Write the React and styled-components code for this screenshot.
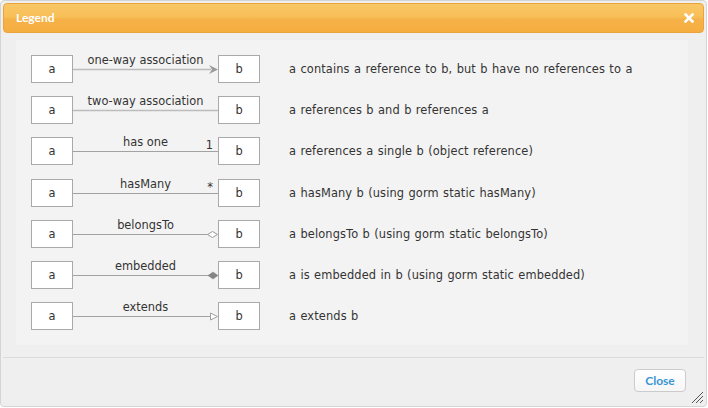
import React from "react";
import styled, { createGlobalStyle } from "styled-components";

const Global = createGlobalStyle`
  html, body { margin: 0; padding: 0; background: #ffffff; }
  body { width: 708px; height: 408px; overflow: hidden; }
`;

const Dialog = styled.div`
  position: relative;
  box-sizing: border-box;
  width: 707px;
  height: 407px;
  border: 1px solid #d4d4d4;
  border-radius: 4px;
  padding: 2px;
  background: #efefef;
  display: flex;
  flex-direction: column;
  font-family: "DejaVu Sans", Verdana, sans-serif;
`;

const Header = styled.div`
  box-sizing: border-box;
  height: 30px;
  border: 1px solid #eba43c;
  border-radius: 4px;
  background: linear-gradient(to bottom, #f9c767 0%, #f8bf58 45%, #f6b248 55%, #f5ad40 100%);
  display: flex;
  align-items: center;
  justify-content: space-between;
  padding: 0 9px 0 12px;
`;

const Title = styled.span`
  font-family: Lato, "Open Sans", sans-serif;
  font-weight: 700;
  font-size: 12px;
  color: #ffffff;
`;

const CloseX = styled.button`
  border: 0;
  background: none;
  padding: 0;
  width: 10px;
  height: 10px;
  display: flex;
  align-items: center;
  justify-content: center;
  cursor: pointer;
`;

const Body = styled.div`
  flex: 1;
  padding: 7px 16px 12px 13px;
`;

const Panel = styled.div`
  background: #f3f3f3;
  padding: 15px;
  display: flex;
  flex-direction: column;
  gap: 13.2px;
`;

const Row = styled.div`
  display: flex;
  align-items: center;
  height: 28px;
`;

const Box = styled.div`
  box-sizing: border-box;
  width: 42px;
  height: 28px;
  border: 1px solid #a9a9a9;
  background: #ffffff;
  display: flex;
  align-items: center;
  justify-content: center;
  font-size: 11.4px;
  color: #333;
`;

const Connector = styled.div`
  width: 145px;
  height: 28px;
  display: grid;
  & > * { grid-area: 1 / 1; }
`;

const Label = styled.span`
  justify-self: center;
  align-self: start;
  margin-top: -1px;
  font-size: 11.4px;
  line-height: 12px;
  color: #333;
  white-space: nowrap;
`;

const Mult = styled.span`
  justify-self: end;
  align-self: start;
  margin-top: 2px;
  margin-right: 5px;
  font-size: 11.4px;
  line-height: 12px;
  color: #333;
`;

const Line = styled.svg`
  width: 145px;
  height: 28px;
  display: block;
`;

const Desc = styled.span`
  margin-left: 29px;
  font-size: 11.4px;
  letter-spacing: 0.12px;
  word-spacing: 0.6px;
  color: #333;
  white-space: nowrap;
`;

const Footer = styled.div`
  border-top: 1px solid #dcdcdc;
  display: flex;
  justify-content: flex-end;
  padding: 11px 18px 0 0;
  height: 47px;
  box-sizing: border-box;
`;

const Button = styled.button`
  box-sizing: border-box;
  width: 52px;
  height: 23px;
  border: 1px solid #cbcbcb;
  border-radius: 4px;
  background: linear-gradient(to bottom, #ffffff, #f6f6f6);
  font-family: Lato, "Open Sans", sans-serif;
  font-weight: 700;
  font-size: 12px;
  color: #3a95d4;
  padding: 0;
  cursor: pointer;
`;

const Grip = styled.svg`
  position: absolute;
  right: 2px;
  bottom: 2px;
  width: 13px;
  height: 13px;
`;

const heads = {
  arrow: <polygon points="145,14.5 136,10 139,14.5 136,19" fill="#9a9a9a" />,
  none: null,
  hollowDiamond: (
    <polygon points="144.5,14.5 139.5,11.5 134.5,14.5 139.5,17.5" fill="#ffffff" stroke="#999" strokeWidth="1" />
  ),
  filledDiamond: (
    <polygon points="145,14.5 140,11 135,14.5 140,18" fill="#858585" stroke="#858585" strokeWidth="0.5" />
  ),
  triangle: <polygon points="144.5,14.5 137.5,11 137.5,18" fill="#ffffff" stroke="#a0a0a0" strokeWidth="1" />,
};

const rows = [
  { label: "one-way association", head: "arrow", light: true, desc: "a contains a reference to b, but b have no references to a" },
  { label: "two-way association", head: "none", light: true, desc: "a references b and b references a" },
  { label: "has one", head: "none", mult: "1", desc: "a references a single b (object reference)" },
  { label: "hasMany", head: "none", mult: "*", desc: "a hasMany b (using gorm static hasMany)" },
  { label: "belongsTo", head: "hollowDiamond", desc: "a belongsTo b (using gorm static belongsTo)" },
  { label: "embedded", head: "filledDiamond", desc: "a is embedded in b (using gorm static embedded)" },
  { label: "extends", head: "triangle", desc: "a extends b" },
];

export default function App() {
  return (
    <>
      <Global />
      <Dialog>
        <Header>
          <Title>Legend</Title>
          <CloseX aria-label="close">
            <svg width="10" height="10" viewBox="0 0 10 10">
              <path d="M1.5 1.5 L8.5 8.5 M8.5 1.5 L1.5 8.5" stroke="#fff" strokeWidth="2.6" strokeLinecap="square" />
            </svg>
          </CloseX>
        </Header>
        <Body>
          <Panel>
            {rows.map((r) => (
              <Row key={r.label}>
                <Box>a</Box>
                <Connector>
                  <Line viewBox="0 0 145 28">
                    <line
                      x1="0"
                      y1="14.5"
                      x2={r.head === "none" ? 145 : 138}
                      y2="14.5"
                      stroke={r.light ? "#bcbcbc" : "#a2a2a2"}
                      strokeWidth={r.light ? 1.6 : 1}
                    />
                    {heads[r.head]}
                  </Line>
                  <Label>{r.label}</Label>
                  {r.mult && <Mult>{r.mult}</Mult>}
                </Connector>
                <Box>b</Box>
                <Desc>{r.desc}</Desc>
              </Row>
            ))}
          </Panel>
        </Body>
        <Footer>
          <Button>Close</Button>
        </Footer>
        <Grip viewBox="0 0 13 13">
          <path d="M12 1 L1 12 M12 5 L5 12 M12 9 L9 12" stroke="#555" strokeWidth="1" />
        </Grip>
      </Dialog>
    </>
  );
}
